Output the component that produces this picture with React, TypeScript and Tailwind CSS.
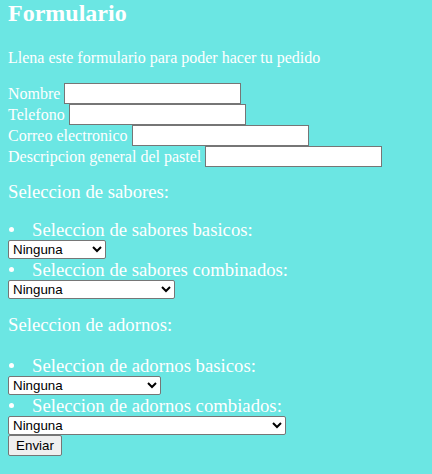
const campos = [
  { label: 'Nombre' },
  { label: 'Telefono' },
  { label: 'Correo electronico' },
  { label: 'Descripcion general del pastel' },
]

function Campo({ label }: { label: string }) {
  return (
    <div className="flex h-[21px] items-center">
      <span>{label}</span>
      <input
        type="text"
        className="ml-1 h-[21px] w-[177px] border border-[#767676] bg-white px-[2px] font-['Liberation_Sans',sans-serif] text-[13.33px] text-black"
      />
    </div>
  )
}

function Opcion({ texto, ancho }: { texto: string; ancho: string }) {
  return (
    <>
      <div className="flex h-[21px] items-center text-[18.72px]">
        <span className="ml-[1px] h-[5px] w-[5px] rounded-full bg-white" />
        <span className="ml-[18px]">{texto}</span>
      </div>
      <select
        className={`block h-[19px] ${ancho} rounded-[2px] border border-[#767676] bg-white font-['Liberation_Sans',sans-serif] text-[13.33px] text-black`}
      >
        <option>Ninguna</option>
      </select>
    </>
  )
}

export default function App() {
  return (
    <div className="min-h-screen bg-[#6be6e3] px-2 font-['Liberation_Serif',serif] text-[16px] leading-[normal] text-white">
      <h1 className="text-[24px] font-bold">Formulario</h1>
      <p className="mt-[22px] mb-4">Llena este formulario para poder hacer tu pedido</p>

      <form onSubmit={(e) => e.preventDefault()}>
        {campos.map((c) => (
          <Campo key={c.label} label={c.label} />
        ))}

        <p className="mt-[14px] text-[18.72px]">Seleccion de sabores:</p>
        <div className="mt-4">
          <Opcion texto="Seleccion de sabores basicos:" ancho="w-[98px]" />
          <Opcion texto="Seleccion de sabores combinados:" ancho="w-[167px]" />
        </div>

        <p className="mt-[15px] text-[18.72px]">Seleccion de adornos:</p>
        <div className="mt-[19px]">
          <Opcion texto="Seleccion de adornos basicos:" ancho="w-[153px]" />
          <Opcion texto="Seleccion de adornos combiados:" ancho="w-[278px]" />
        </div>

        <button
          type="submit"
          className="block h-[21px] w-[54px] rounded-[2px] border border-[#767676] bg-[#efefef] font-['Liberation_Sans',sans-serif] text-[13.33px] text-black"
        >
          Enviar
        </button>
      </form>
    </div>
  )
}
